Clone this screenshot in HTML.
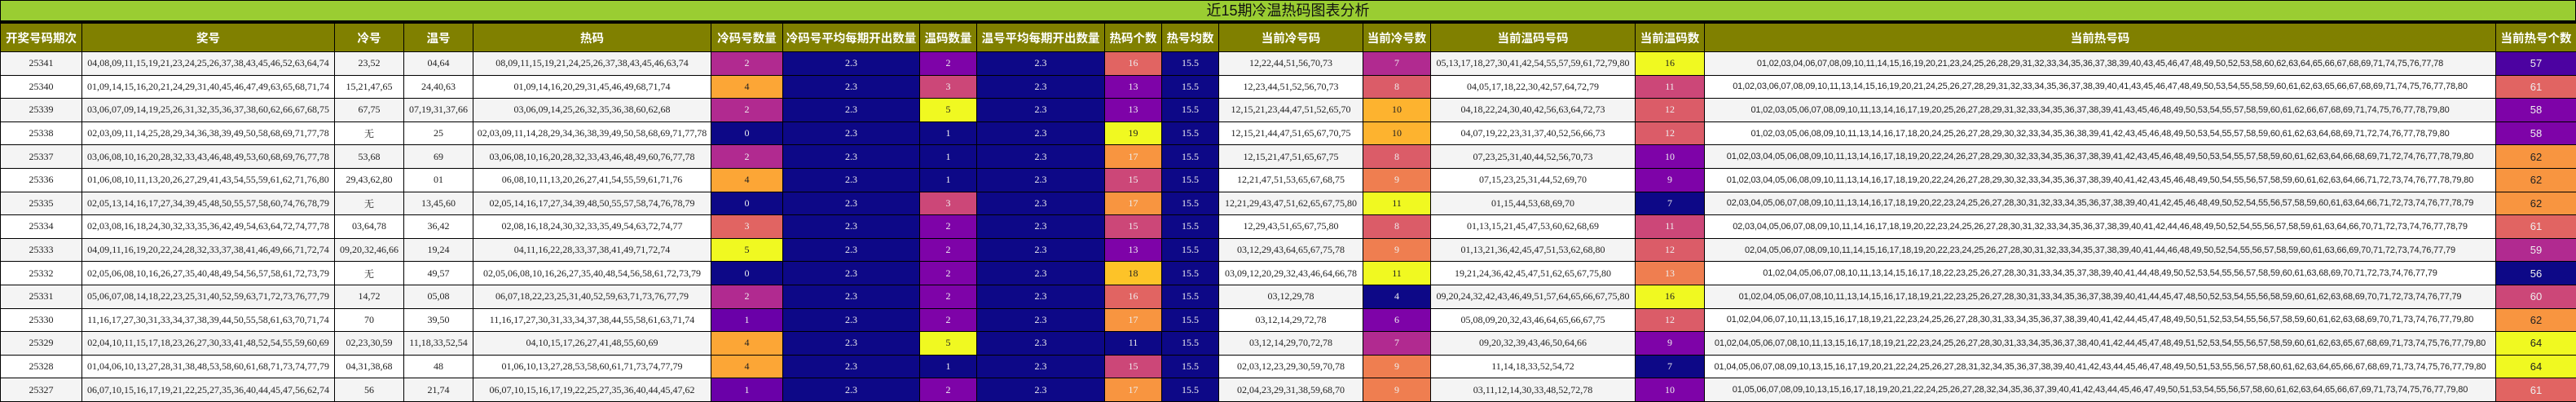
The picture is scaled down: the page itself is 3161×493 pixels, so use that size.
<!DOCTYPE html>
<html><head><meta charset="utf-8">
<style>
*{margin:0;padding:0;box-sizing:border-box}
html,body{width:3161px;height:493px;overflow:hidden;background:#fff}
.title{height:28px;background:#9acd32;border:1px solid #000;border-bottom:3px solid #000;text-align:center;font:18px "Liberation Sans","Noto Sans CJK SC",sans-serif;line-height:24px;color:#111}
table{border-collapse:collapse;table-layout:fixed;width:3161px}
td,th{border:1px solid #000;text-align:center;white-space:nowrap;overflow:hidden}
th{background:#808000;color:#fff;font:bold 14.5px "Liberation Sans","Noto Sans CJK SC",sans-serif;height:35px}
td{font:12px "Liberation Serif","Noto Serif CJK SC",serif;color:#222;height:28.6px}
tr:nth-child(even) td{background:#f4f4f4}
tr:nth-child(odd) td{background:#fff}
td.h{font:11px "Liberation Sans",sans-serif;letter-spacing:-0.15px}
td.l{font:13px "Liberation Sans",sans-serif}
tr td.N{background:#0d0887;color:#eee}
tr td.P{background:#7e03a8;color:#eee}
tr td.Q{background:#6a00a8;color:#eee}
tr td.R{background:#4c02a1;color:#eee}
tr td.M{background:#b12a90;color:#eee}
tr td.K{background:#cc4778;color:#eee}
tr td.S{background:#e16462;color:#eee}
tr td.T{background:#db5c68;color:#eee}
tr td.O{background:#f89540;color:#eee}
tr td.F{background:#ef7e50;color:#eee}
tr td.G{background:#fca636;color:#222}
tr td.D{background:#fdb32f;color:#222}
tr td.E{background:#fdc328;color:#222}
tr td.Y{background:#f0f921;color:#222}
tr td.l.O{color:#222}
</style></head><body>
<div class="title">近15期冷温热码图表分析</div>
<table>
<colgroup><col style="width:100px"><col style="width:310px"><col style="width:85px"><col style="width:85px"><col style="width:292px"><col style="width:88px"><col style="width:168px"><col style="width:70px"><col style="width:157px"><col style="width:70px"><col style="width:70px"><col style="width:177px"><col style="width:83px"><col style="width:251px"><col style="width:85px"><col style="width:971px"><col style="width:99px"></colgroup>
<tr><th>开奖号码期次</th><th>奖号</th><th>冷号</th><th>温号</th><th>热码</th><th>冷码号数量</th><th>冷码号平均每期开出数量</th><th>温码数量</th><th>温号平均每期开出数量</th><th>热码个数</th><th>热号均数</th><th>当前冷号码</th><th>当前冷号数</th><th>当前温码号码</th><th>当前温码数</th><th>当前热号码</th><th>当前热号个数</th></tr>
<tr><td>25341</td><td>04,08,09,11,15,19,21,23,24,25,26,37,38,43,45,46,52,63,64,74</td><td>23,52</td><td>04,64</td><td>08,09,11,15,19,21,24,25,26,37,38,43,45,46,63,74</td><td class="M">2</td><td class="N">2.3</td><td class="P">2</td><td class="N">2.3</td><td class="S">16</td><td class="N">15.5</td><td>12,22,44,51,56,70,73</td><td class="M">7</td><td>05,13,17,18,27,30,41,42,54,55,57,59,61,72,79,80</td><td class="Y">16</td><td class="h">01,02,03,04,06,07,08,09,10,11,14,15,16,19,20,21,23,24,25,26,28,29,31,32,33,34,35,36,37,38,39,40,43,45,46,47,48,49,50,52,53,58,60,62,63,64,65,66,67,68,69,71,74,75,76,77,78</td><td class="l R">57</td></tr>
<tr><td>25340</td><td>01,09,14,15,16,20,21,24,29,31,40,45,46,47,49,63,65,68,71,74</td><td>15,21,47,65</td><td>24,40,63</td><td>01,09,14,16,20,29,31,45,46,49,68,71,74</td><td class="G">4</td><td class="N">2.3</td><td class="K">3</td><td class="N">2.3</td><td class="P">13</td><td class="N">15.5</td><td>12,23,44,51,52,56,70,73</td><td class="T">8</td><td>04,05,17,18,22,30,42,57,64,72,79</td><td class="K">11</td><td class="h">01,02,03,06,07,08,09,10,11,13,14,15,16,19,20,21,24,25,26,27,28,29,31,32,33,34,35,36,37,38,39,40,41,43,45,46,47,48,49,50,53,54,55,58,59,60,61,62,63,65,66,67,68,69,71,74,75,76,77,78,80</td><td class="l S">61</td></tr>
<tr><td>25339</td><td>03,06,07,09,14,19,25,26,31,32,35,36,37,38,60,62,66,67,68,75</td><td>67,75</td><td>07,19,31,37,66</td><td>03,06,09,14,25,26,32,35,36,38,60,62,68</td><td class="M">2</td><td class="N">2.3</td><td class="Y">5</td><td class="N">2.3</td><td class="P">13</td><td class="N">15.5</td><td>12,15,21,23,44,47,51,52,65,70</td><td class="D">10</td><td>04,18,22,24,30,40,42,56,63,64,72,73</td><td class="T">12</td><td class="h">01,02,03,05,06,07,08,09,10,11,13,14,16,17,19,20,25,26,27,28,29,31,32,33,34,35,36,37,38,39,41,43,45,46,48,49,50,53,54,55,57,58,59,60,61,62,66,67,68,69,71,74,75,76,77,78,79,80</td><td class="l P">58</td></tr>
<tr><td>25338</td><td>02,03,09,11,14,25,28,29,34,36,38,39,49,50,58,68,69,71,77,78</td><td>无</td><td>25</td><td>02,03,09,11,14,28,29,34,36,38,39,49,50,58,68,69,71,77,78</td><td class="N">0</td><td class="N">2.3</td><td class="N">1</td><td class="N">2.3</td><td class="Y">19</td><td class="N">15.5</td><td>12,15,21,44,47,51,65,67,70,75</td><td class="D">10</td><td>04,07,19,22,23,31,37,40,52,56,66,73</td><td class="T">12</td><td class="h">01,02,03,05,06,08,09,10,11,13,14,16,17,18,20,24,25,26,27,28,29,30,32,33,34,35,36,38,39,41,42,43,45,46,48,49,50,53,54,55,57,58,59,60,61,62,63,64,68,69,71,72,74,76,77,78,79,80</td><td class="l P">58</td></tr>
<tr><td>25337</td><td>03,06,08,10,16,20,28,32,33,43,46,48,49,53,60,68,69,76,77,78</td><td>53,68</td><td>69</td><td>03,06,08,10,16,20,28,32,33,43,46,48,49,60,76,77,78</td><td class="M">2</td><td class="N">2.3</td><td class="N">1</td><td class="N">2.3</td><td class="O">17</td><td class="N">15.5</td><td>12,15,21,47,51,65,67,75</td><td class="T">8</td><td>07,23,25,31,40,44,52,56,70,73</td><td class="P">10</td><td class="h">01,02,03,04,05,06,08,09,10,11,13,14,16,17,18,19,20,22,24,26,27,28,29,30,32,33,34,35,36,37,38,39,41,42,43,45,46,48,49,50,53,54,55,57,58,59,60,61,62,63,64,66,68,69,71,72,74,76,77,78,79,80</td><td class="l O">62</td></tr>
<tr><td>25336</td><td>01,06,08,10,11,13,20,26,27,29,41,43,54,55,59,61,62,71,76,80</td><td>29,43,62,80</td><td>01</td><td>06,08,10,11,13,20,26,27,41,54,55,59,61,71,76</td><td class="G">4</td><td class="N">2.3</td><td class="N">1</td><td class="N">2.3</td><td class="K">15</td><td class="N">15.5</td><td>12,21,47,51,53,65,67,68,75</td><td class="F">9</td><td>07,15,23,25,31,44,52,69,70</td><td class="P">9</td><td class="h">01,02,03,04,05,06,08,09,10,11,13,14,16,17,18,19,20,22,24,26,27,28,29,30,32,33,34,35,36,37,38,39,40,41,42,43,45,46,48,49,50,54,55,56,57,58,59,60,61,62,63,64,66,71,72,73,74,76,77,78,79,80</td><td class="l O">62</td></tr>
<tr><td>25335</td><td>02,05,13,14,16,17,27,34,39,45,48,50,55,57,58,60,74,76,78,79</td><td>无</td><td>13,45,60</td><td>02,05,14,16,17,27,34,39,48,50,55,57,58,74,76,78,79</td><td class="N">0</td><td class="N">2.3</td><td class="K">3</td><td class="N">2.3</td><td class="O">17</td><td class="N">15.5</td><td>12,21,29,43,47,51,62,65,67,75,80</td><td class="Y">11</td><td>01,15,44,53,68,69,70</td><td class="N">7</td><td class="h">02,03,04,05,06,07,08,09,10,11,13,14,16,17,18,19,20,22,23,24,25,26,27,28,30,31,32,33,34,35,36,37,38,39,40,41,42,45,46,48,49,50,52,54,55,56,57,58,59,60,61,63,64,66,71,72,73,74,76,77,78,79</td><td class="l O">62</td></tr>
<tr><td>25334</td><td>02,03,08,16,18,24,30,32,33,35,36,42,49,54,63,64,72,74,77,78</td><td>03,64,78</td><td>36,42</td><td>02,08,16,18,24,30,32,33,35,49,54,63,72,74,77</td><td class="S">3</td><td class="N">2.3</td><td class="P">2</td><td class="N">2.3</td><td class="K">15</td><td class="N">15.5</td><td>12,29,43,51,65,67,75,80</td><td class="T">8</td><td>01,13,15,21,45,47,53,60,62,68,69</td><td class="K">11</td><td class="h">02,03,04,05,06,07,08,09,10,11,14,16,17,18,19,20,22,23,24,25,26,27,28,30,31,32,33,34,35,36,37,38,39,40,41,42,44,46,48,49,50,52,54,55,56,57,58,59,61,63,64,66,70,71,72,73,74,76,77,78,79</td><td class="l S">61</td></tr>
<tr><td>25333</td><td>04,09,11,16,19,20,22,24,28,32,33,37,38,41,46,49,66,71,72,74</td><td>09,20,32,46,66</td><td>19,24</td><td>04,11,16,22,28,33,37,38,41,49,71,72,74</td><td class="Y">5</td><td class="N">2.3</td><td class="P">2</td><td class="N">2.3</td><td class="P">13</td><td class="N">15.5</td><td>03,12,29,43,64,65,67,75,78</td><td class="F">9</td><td>01,13,21,36,42,45,47,51,53,62,68,80</td><td class="T">12</td><td class="h">02,04,05,06,07,08,09,10,11,14,15,16,17,18,19,20,22,23,24,25,26,27,28,30,31,32,33,34,35,37,38,39,40,41,44,46,48,49,50,52,54,55,56,57,58,59,60,61,63,66,69,70,71,72,73,74,76,77,79</td><td class="l M">59</td></tr>
<tr><td>25332</td><td>02,05,06,08,10,16,26,27,35,40,48,49,54,56,57,58,61,72,73,79</td><td>无</td><td>49,57</td><td>02,05,06,08,10,16,26,27,35,40,48,54,56,58,61,72,73,79</td><td class="N">0</td><td class="N">2.3</td><td class="P">2</td><td class="N">2.3</td><td class="E">18</td><td class="N">15.5</td><td>03,09,12,20,29,32,43,46,64,66,78</td><td class="Y">11</td><td>19,21,24,36,42,45,47,51,62,65,67,75,80</td><td class="F">13</td><td class="h">01,02,04,05,06,07,08,10,11,13,14,15,16,17,18,22,23,25,26,27,28,30,31,33,34,35,37,38,39,40,41,44,48,49,50,52,53,54,55,56,57,58,59,60,61,63,68,69,70,71,72,73,74,76,77,79</td><td class="l N">56</td></tr>
<tr><td>25331</td><td>05,06,07,08,14,18,22,23,25,31,40,52,59,63,71,72,73,76,77,79</td><td>14,72</td><td>05,08</td><td>06,07,18,22,23,25,31,40,52,59,63,71,73,76,77,79</td><td class="M">2</td><td class="N">2.3</td><td class="P">2</td><td class="N">2.3</td><td class="S">16</td><td class="N">15.5</td><td>03,12,29,78</td><td class="N">4</td><td>09,20,24,32,42,43,46,49,51,57,64,65,66,67,75,80</td><td class="Y">16</td><td class="h">01,02,04,05,06,07,08,10,11,13,14,15,16,17,18,19,21,22,23,25,26,27,28,30,31,33,34,35,36,37,38,39,40,41,44,45,47,48,50,52,53,54,55,56,58,59,60,61,62,63,68,69,70,71,72,73,74,76,77,79</td><td class="l K">60</td></tr>
<tr><td>25330</td><td>11,16,17,27,30,31,33,34,37,38,39,44,50,55,58,61,63,70,71,74</td><td>70</td><td>39,50</td><td>11,16,17,27,30,31,33,34,37,38,44,55,58,61,63,71,74</td><td class="Q">1</td><td class="N">2.3</td><td class="P">2</td><td class="N">2.3</td><td class="O">17</td><td class="N">15.5</td><td>03,12,14,29,72,78</td><td class="P">6</td><td>05,08,09,20,32,43,46,64,65,66,67,75</td><td class="T">12</td><td class="h">01,02,04,06,07,10,11,13,15,16,17,18,19,21,22,23,24,25,26,27,28,30,31,33,34,35,36,37,38,39,40,41,42,44,45,47,48,49,50,51,52,53,54,55,56,57,58,59,60,61,62,63,68,69,70,71,73,74,76,77,79,80</td><td class="l O">62</td></tr>
<tr><td>25329</td><td>02,04,10,11,15,17,18,23,26,27,30,33,41,48,52,54,55,59,60,69</td><td>02,23,30,59</td><td>11,18,33,52,54</td><td>04,10,15,17,26,27,41,48,55,60,69</td><td class="G">4</td><td class="N">2.3</td><td class="Y">5</td><td class="N">2.3</td><td class="N">11</td><td class="N">15.5</td><td>03,12,14,29,70,72,78</td><td class="M">7</td><td>09,20,32,39,43,46,50,64,66</td><td class="P">9</td><td class="h">01,02,04,05,06,07,08,10,11,13,15,16,17,18,19,21,22,23,24,25,26,27,28,30,31,33,34,35,36,37,38,40,41,42,44,45,47,48,49,51,52,53,54,55,56,57,58,59,60,61,62,63,65,67,68,69,71,73,74,75,76,77,79,80</td><td class="l Y">64</td></tr>
<tr><td>25328</td><td>01,04,06,10,13,27,28,31,38,48,53,58,60,61,68,71,73,74,77,79</td><td>04,31,38,68</td><td>48</td><td>01,06,10,13,27,28,53,58,60,61,71,73,74,77,79</td><td class="G">4</td><td class="N">2.3</td><td class="N">1</td><td class="N">2.3</td><td class="K">15</td><td class="N">15.5</td><td>02,03,12,23,29,30,59,70,78</td><td class="F">9</td><td>11,14,18,33,52,54,72</td><td class="N">7</td><td class="h">01,04,05,06,07,08,09,10,13,15,16,17,19,20,21,22,24,25,26,27,28,31,32,34,35,36,37,38,39,40,41,42,43,44,45,46,47,48,49,50,51,53,55,56,57,58,60,61,62,63,64,65,66,67,68,69,71,73,74,75,76,77,79,80</td><td class="l Y">64</td></tr>
<tr><td>25327</td><td>06,07,10,15,16,17,19,21,22,25,27,35,36,40,44,45,47,56,62,74</td><td>56</td><td>21,74</td><td>06,07,10,15,16,17,19,22,25,27,35,36,40,44,45,47,62</td><td class="Q">1</td><td class="N">2.3</td><td class="P">2</td><td class="N">2.3</td><td class="O">17</td><td class="N">15.5</td><td>02,04,23,29,31,38,59,68,70</td><td class="F">9</td><td>03,11,12,14,30,33,48,52,72,78</td><td class="P">10</td><td class="h">01,05,06,07,08,09,10,13,15,16,17,18,19,20,21,22,24,25,26,27,28,32,34,35,36,37,39,40,41,42,43,44,45,46,47,49,50,51,53,54,55,56,57,58,60,61,62,63,64,65,66,67,69,71,73,74,75,76,77,79,80</td><td class="l S">61</td></tr>
</table>
</body></html>
